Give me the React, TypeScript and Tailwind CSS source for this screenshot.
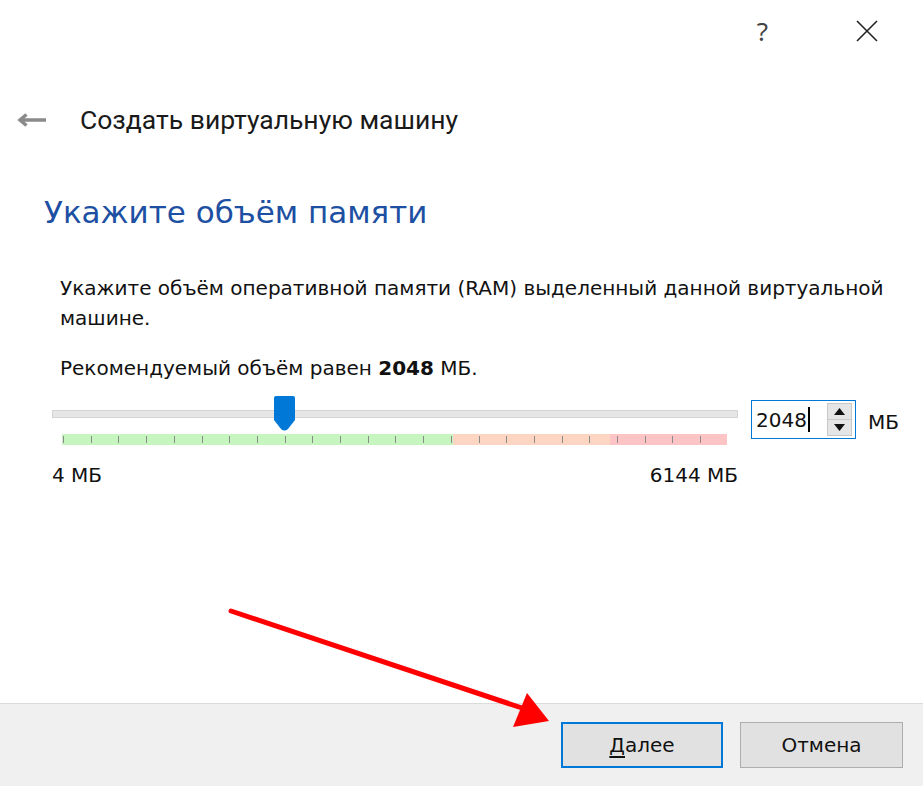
import React from 'react';

const TICKS = Array.from({ length: 24 }, (_, i) => i);

const Slider: React.FC = () => {
  return (
    <div className="w-[686px] flex flex-col">
      {/* Track + thumb */}
      <div className="relative h-[38px]">
        <div className="absolute left-0 right-0 top-[14px] h-[8px] bg-[#e6e6e6] border border-[#d4d4d4]" />
        <svg className="absolute left-[222px] top-0" width="21" height="35" viewBox="0 0 21 35">
          <path d="M2 0 H19 Q21 0 21 2 V24 L14 33 Q10.5 36 7 33 L0 24 V2 Q0 0 2 0 Z" fill="#0078d7" />
        </svg>
      </div>
      {/* Tick bar */}
      <div className="ml-[10px] w-[665px] h-[11px] relative flex">
        <div className="h-full w-[391px] bg-[#c6f5c0]" />
        <div className="h-full w-[157px] bg-[#fdd6c3]" />
        <div className="h-full flex-1 bg-[#fcc4c4]" />
        {TICKS.map((i) => (
          <div
            key={i}
            className="absolute top-[2px] h-[7px] w-px bg-[#8a8a8a]"
            style={{ left: `${Math.round(i * 27.7) + 1}px` }}
          />
        ))}
      </div>
      <div className="mt-[17px] flex justify-between text-[20px] leading-[26px] text-[#111]">
        <span>4 МБ</span>
        <span>6144 МБ</span>
      </div>
    </div>
  );
};

const SpinBox: React.FC = () => {
  return (
    <div className="ml-[13px] mt-[4px] w-[105px] h-[39px] border border-[#0078d7] bg-white flex items-center">
      <div className="flex-1 flex items-center pl-[4px] text-[20px] text-[#111]">
        2048<span className="inline-block w-[2px] h-[25px] bg-black ml-[1px]" />
      </div>
      <div className="w-[25px] h-[33px] mr-[3px] flex flex-col border border-[#c8c8c8] bg-[#e5e5e5]">
        <div className="flex-1 flex items-center justify-center border-b border-[#c8c8c8]">
          <svg width="11" height="7" viewBox="0 0 11 7"><path d="M0 7 L5.5 0 L11 7 Z" fill="#111" /></svg>
        </div>
        <div className="flex-1 flex items-center justify-center">
          <svg width="11" height="7" viewBox="0 0 11 7"><path d="M0 0 L5.5 7 L11 0 Z" fill="#111" /></svg>
        </div>
      </div>
    </div>
  );
};

export default function App() {
  return (
    <div
      className="relative w-[923px] h-[786px] bg-white flex flex-col overflow-hidden"
      style={{ fontFamily: '"DejaVu Sans", Verdana, sans-serif' }}
    >
      {/* Window controls */}
      <div className="h-[62px] flex items-center justify-end pr-[45px]">
        <span className="text-[26px] text-[#444] mr-[88px] font-['Noto_Sans',sans-serif]">?</span>
        <svg width="22" height="22" viewBox="0 0 22 22" stroke="#222" strokeWidth="1.6">
          <path d="M1 1 L21 21 M21 1 L1 21" />
        </svg>
      </div>

      {/* Title */}
      <div className="mt-[38px] h-[40px] flex items-center pl-[17px]">
        <svg width="30" height="14" viewBox="0 0 30 14" fill="none" stroke="#8a8a8a" strokeWidth="3.5">
          <path d="M29 7 H4 M9.5 1.5 L3 7 L9.5 12.5" />
        </svg>
        <span className="ml-[33px] text-[26.5px] text-[#1a1a1a] font-['Roboto',sans-serif]">
          Создать виртуальную машину
        </span>
      </div>

      {/* Heading */}
      <h1 className="mt-[52px] pl-[44px] text-[31px] leading-[40px] text-[#1d4fa3]">
        Укажите объём памяти
      </h1>

      {/* Description */}
      <div className="mt-[41px] pl-[60px] pr-[30px] text-[20px] leading-[30px] text-[#111]">
        <p>Укажите объём оперативной памяти (RAM) выделенный данной виртуальной машине.</p>
        <p className="mt-[20px]">
          Рекомендуемый объём равен <b>2048</b> МБ.
        </p>
      </div>

      {/* Slider row */}
      <div className="mt-[13px] pl-[52px] flex items-start">
        <Slider />
        <SpinBox />
        <span className="ml-[12px] mt-[11px] text-[20px] text-[#111]">МБ</span>
      </div>

      {/* Footer */}
      <div className="mt-auto h-[83px] bg-[#f0f0f0] border-t border-[#dadada] flex items-start justify-end pt-[18px] pr-[20px] gap-[17px]">
        <button className="w-[162px] h-[46px] bg-[#e1e1e1] border-2 border-[#0078d7] text-[20px] text-[#111]">
          <span className="underline underline-offset-4">Д</span>алее
        </button>
        <button className="w-[163px] h-[46px] bg-[#e1e1e1] border border-[#adadad] text-[20px] text-[#111]">
          Отмена
        </button>
      </div>

      {/* Red annotation arrow */}
      <svg className="absolute left-0 top-0 pointer-events-none" width="923" height="786" viewBox="0 0 923 786">
        <line x1="231" y1="611" x2="522" y2="708" stroke="#f00" strokeWidth="5" strokeLinecap="round" />
        <path d="M549 721 L513 727 L527 693 Z" fill="#f00" />
      </svg>
    </div>
  );
}
